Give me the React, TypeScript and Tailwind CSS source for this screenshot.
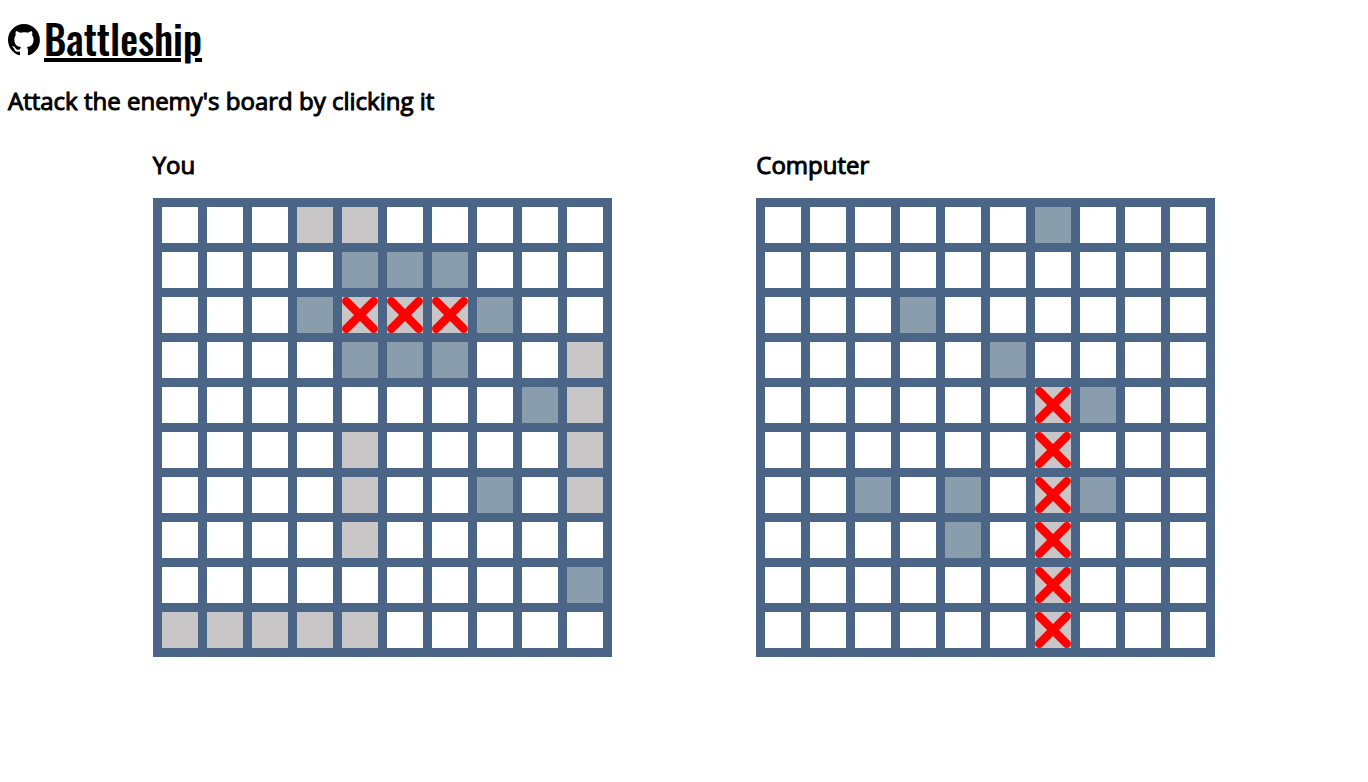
type Cell = "." | "s" | "m" | "x";

const playerBoard: string[] = [
  "...ss.....",
  "....mmm...",
  "...mxxxm..",
  "....mmm..s",
  "........ms",
  "....s....s",
  "....s..m.s",
  "....s.....",
  ".........m",
  "sssss.....",
];

const computerBoard: string[] = [
  "......m...",
  "..........",
  "...m......",
  ".....m....",
  "......xm..",
  "......x...",
  "..m.m.xm..",
  "....m.x...",
  "......x...",
  "......x...",
];

const cellColors: Record<Cell, string> = {
  ".": "bg-white",
  s: "bg-[#c8c6c7]",
  m: "bg-[#899dad]",
  x: "bg-[#c8c6c7]",
};

const cellNames: Record<Cell, string> = {
  ".": "open water",
  s: "ship",
  m: "miss",
  x: "hit",
};

function HitMark() {
  return (
    <svg viewBox="0 0 36 36" className="block size-9" aria-hidden="true">
      <path d="M4.3 4.3 31.7 31.7M31.7 4.3 4.3 31.7" stroke="#ff0000" strokeWidth="8.4" strokeLinecap="round" />
    </svg>
  );
}

function Board({ title, rows, clickable }: { title: string; rows: string[]; clickable?: boolean }) {
  return (
    <section className="flex flex-col gap-4">
      <h2 className="text-2xl leading-[34px] font-normal [-webkit-text-stroke:1px_black]">{title}</h2>
      <div className="grid grid-cols-[repeat(10,36px)] gap-[9px] bg-[#4b6587] p-[9px]">
        {rows.flatMap((row, y) =>
          [...row].map((value, x) => {
            const cell = value as Cell;
            const mark = cell === "x" ? <HitMark /> : null;
            return clickable ? (
              <button
                key={`${y}-${x}`}
                type="button"
                aria-label={`Row ${y + 1}, column ${x + 1}, ${cellNames[cell]}`}
                className={`size-9 cursor-pointer ${cellColors[cell]}`}
              >
                {mark}
              </button>
            ) : (
              <div key={`${y}-${x}`} className={`size-9 ${cellColors[cell]}`}>
                {mark}
              </div>
            );
          }),
        )}
      </div>
    </section>
  );
}

export default function App() {
  return (
    <div className="p-2 font-['Open_Sans',sans-serif] text-black">
      <header>
        <a href="#battleship" className="flex w-fit items-center gap-1">
          <svg viewBox="0 0 98 98" className="size-8" fill="currentColor" aria-hidden="true">
            <path
              fillRule="evenodd"
              d="M48.854 0C21.839 0 0 22 0 49.217c0 21.756 13.993 40.172 33.405 46.69 2.427.49 3.316-1.059 3.316-2.362 0-1.141-.08-5.052-.08-9.127-13.59 2.934-16.42-5.867-16.42-5.867-2.184-5.704-5.42-7.17-5.42-7.17-4.448-3.015.324-3.015.324-3.015 4.934.326 7.523 5.052 7.523 5.052 4.367 7.496 11.404 5.378 14.235 4.074.404-3.178 1.699-5.378 3.074-6.6C29.1 69.8 19.4 65 19.4 47c0-5.2 1.8-9.4 4.6-12.7-.5-1.2-2.1-5.7.4-12.1 0 0 3.9-1.2 12.6 4.7a44 44 0 0 1 11.85-1.5c4 0 8.1.5 11.85 1.5 8.7-5.9 12.6-4.7 12.6-4.7 2.5 6.4.9 10.9.4 12.1 2.9 3.3 4.6 7.5 4.6 12.7 0 18-9.7 22.7-20.6 23.9 1.78 1.548 3.316 4.481 3.316 9.126 0 6.6-.08 11.897-.08 13.526 0 1.304.89 2.853 3.316 2.364 19.412-6.52 33.405-24.935 33.405-46.691C97.707 22 75.788 0 48.854 0z"
            />
          </svg>
          <h1 className="pb-1 font-['Oswald',sans-serif] text-[40px] leading-[60px] font-medium underline decoration-4">
            Battleship
          </h1>
        </a>
      </header>
      <p className="mt-3 text-2xl leading-[34px] [-webkit-text-stroke:1px_black]">Attack the enemy's board by clicking it</p>
      <main className="mt-[30px] flex flex-wrap justify-evenly">
        <Board title="You" rows={playerBoard} />
        <Board title="Computer" rows={computerBoard} clickable />
      </main>
    </div>
  );
}
